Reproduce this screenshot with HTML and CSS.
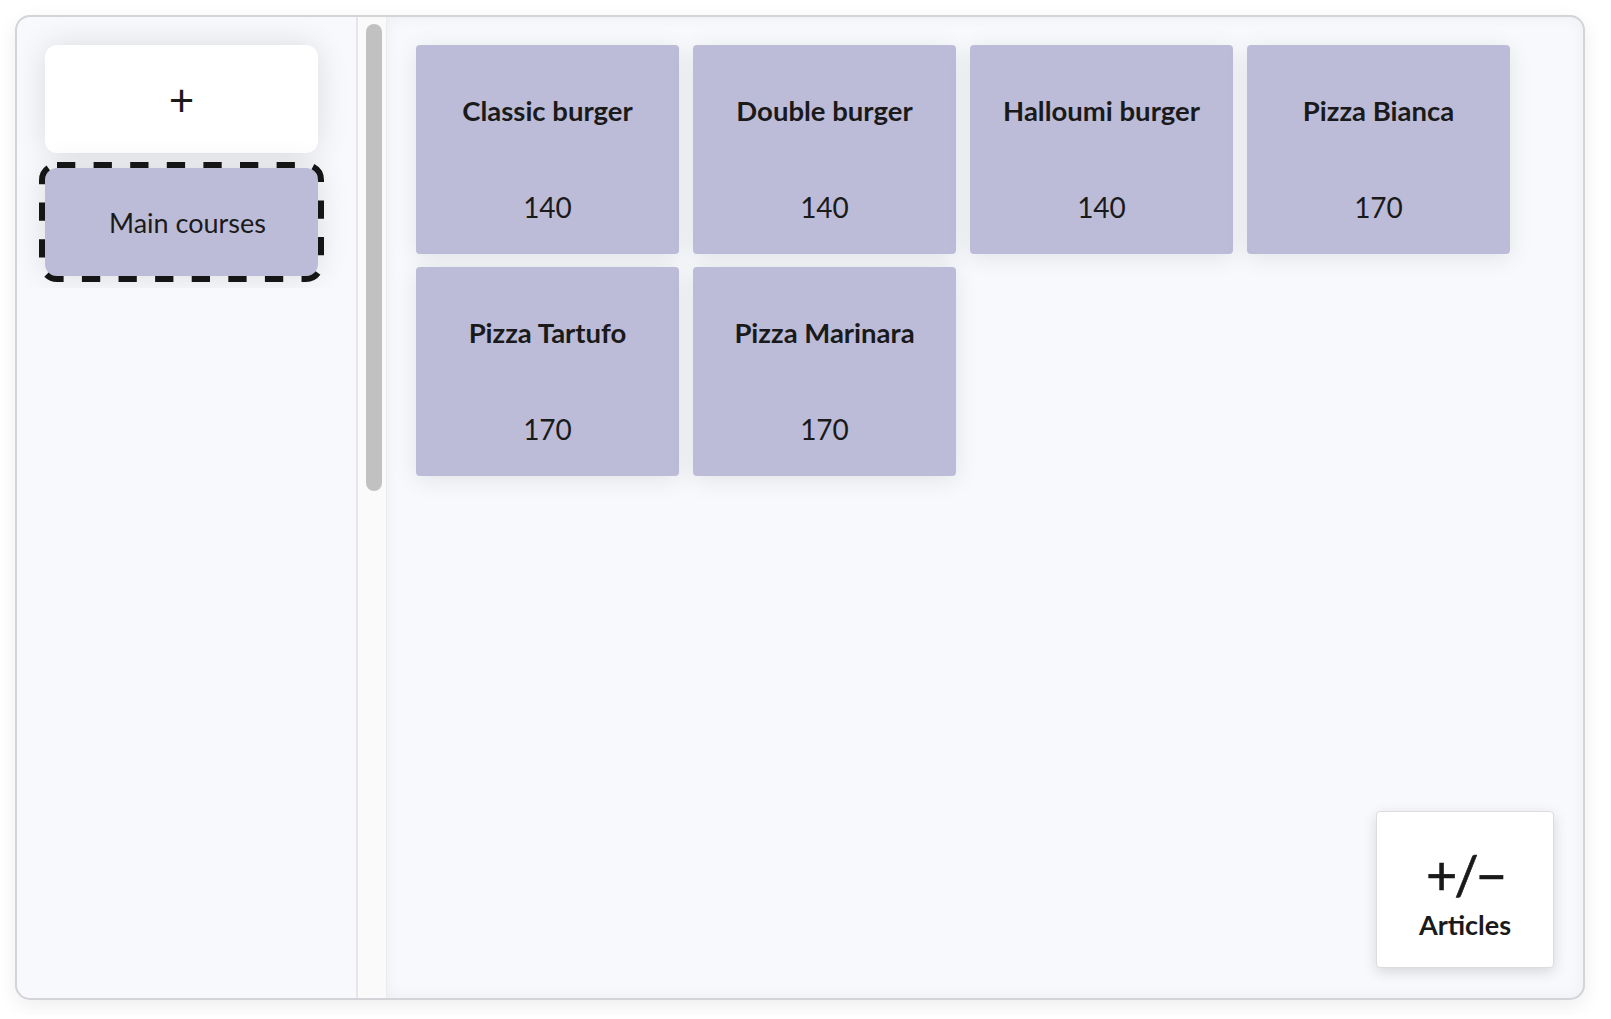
FILE: index.html
```html
<!DOCTYPE html>
<html lang="en">
<head>
    <meta charset="UTF-8">
    <meta name="viewport" content="width=device-width, initial-scale=1.0">
    <title>Register</title>
    <link rel="stylesheet" href="styles.css">
</head>
<body>
  <div class="register">
    <aside class="sidebar">
      <div class="categories">
        <button class="cat add">+</button>
        <button class="cat selected">
          Main courses
          <svg class="dashes" width="285" height="120" viewBox="0 0 285 120">
            <rect x="3" y="3" width="279" height="114" rx="15" ry="15" />
          </svg>
        </button>
      </div>
    </aside>
    <div class="scrollbar"><div class="thumb"></div></div>
    <main class="articles">
      <ul class="grid">
        <li class="card"><h3>Classic burger</h3><p class="price">140</p></li>
        <li class="card"><h3>Double burger</h3><p class="price">140</p></li>
        <li class="card"><h3>Halloumi burger</h3><p class="price">140</p></li>
        <li class="card"><h3>Pizza Bianca</h3><p class="price">170</p></li>
        <li class="card"><h3>Pizza Tartufo</h3><p class="price">170</p></li>
        <li class="card"><h3>Pizza Marinara</h3><p class="price">170</p></li>
      </ul>
      <button class="edit-articles">
        <span class="sign">+/&minus;</span>
        <span class="label">Articles</span>
      </button>
    </main>
  </div>
</body>
</html>
```

FILE: styles.css
```css
*{
    margin: 0;
    padding: 0;
    box-sizing: border-box;
    font-family: Lato, 'Liberation Sans', sans-serif;
}
body{
    background-color: #fff;
}
.register{
    margin: 15px;
    width: 1570px;
    height: 985px;
    border: 2px solid #d4d4d8;
    border-radius: 15px;
    background-color: #f8f9fd;
    display: flex;
    overflow: hidden;
    box-shadow: 0 6px 20px rgba(0, 0, 0, 0.07);
}
.sidebar{
    width: 341px;
    flex-shrink: 0;
    border-right: 2px solid #e6e6e9;
}
.categories{
    display: flex;
    flex-direction: column;
    gap: 15px;
    padding: 28px 38px 12px 28px;
    overflow: hidden;
}
.cat{
    height: 108px;
    border: none;
    border-radius: 12px;
    box-shadow: 0 0 32px rgba(0, 0, 0, 0.12);
    color: #1a1a1a;
    font-size: 27px;
    cursor: pointer;
}
.add{
    background-color: #fff;
    font-size: 44px;
}
.selected{
    position: relative;
    background-color: #bdbcd8;
    padding-left: 12px;
}
.dashes{
    position: absolute;
    left: -6px;
    top: -6px;
}
.dashes rect{
    fill: none;
    stroke: #151515;
    stroke-width: 6;
    stroke-dasharray: 18.3 18.3;
}
.scrollbar{
    width: 29px;
    flex-shrink: 0;
    background-color: #fafafa;
    border-right: 1px solid #ececec;
    padding: 7px 0 0 8px;
}
.thumb{
    width: 16px;
    height: 467px;
    border-radius: 8px;
    background-color: #c1c1c1;
}
.articles{
    flex: 1;
    position: relative;
    padding: 28px 29px;
    box-shadow: inset 0 0 16px rgba(0, 0, 0, 0.05);
}
.grid{
    list-style: none;
    display: grid;
    grid-template-columns: repeat(4, 263px);
    grid-auto-rows: 209px;
    column-gap: 14px;
    row-gap: 13px;
}
.card{
    background-color: #bdbcd8;
    border-radius: 4px;
    box-shadow: 0 4px 24px rgba(0, 0, 0, 0.09);
    text-align: center;
    color: #1a1a1a;
    padding-top: 50px;
    cursor: pointer;
}
.card h3{
    font-size: 27.5px;
    font-weight: 700;
    line-height: 31px;
}
.card .price{
    font-size: 28px;
    line-height: 34px;
    margin-top: 64px;
}
.edit-articles{
    position: absolute;
    right: 29px;
    bottom: 30px;
    width: 178px;
    height: 157px;
    padding-top: 10px;
    background-color: #fff;
    border: 1px solid #dcdcdc;
    border-radius: 4px;
    box-shadow: 0 4px 14px rgba(0, 0, 0, 0.14);
    display: flex;
    flex-direction: column;
    align-items: center;
    justify-content: center;
    color: #1a1a1a;
    cursor: pointer;
}
.edit-articles .sign{
    font-size: 54px;
    line-height: 52px;
    letter-spacing: -3px;
    -webkit-text-stroke: 0.6px #1a1a1a;
}
.edit-articles .label{
    font-size: 27px;
    font-weight: 700;
    line-height: 32px;
    margin-top: 8px;
}
```
